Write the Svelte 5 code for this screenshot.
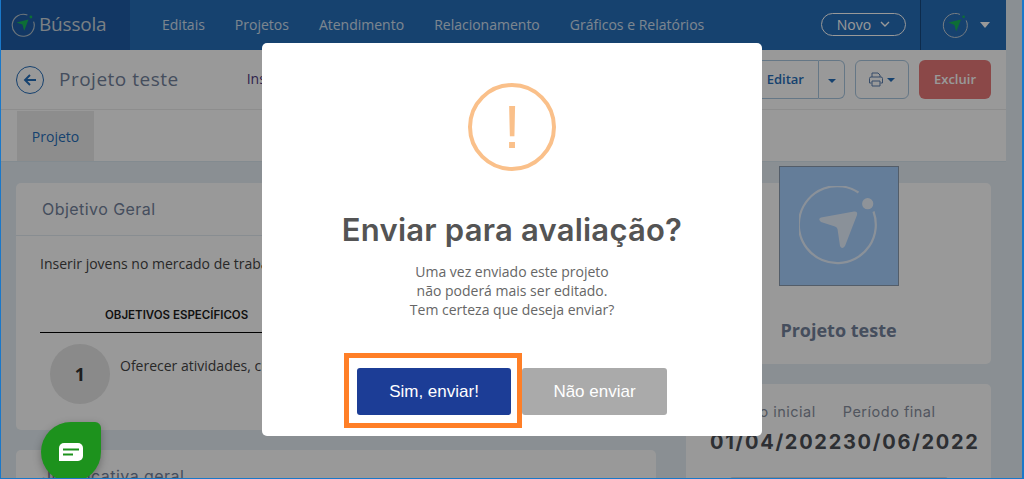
<script>
  const nav = ['Editais', 'Projetos', 'Atendimento', 'Relacionamento', 'Gráficos e Relatórios'];
</script>

<div class="frame">
  <div class="page">
    <div class="shell">
      <header class="topbar">
        <div class="brand">
          <svg class="brand-mark" viewBox="0 0 24 24" width="24" height="24" aria-hidden="true">
            <path d="M16.400 2.100A11 11 0 1 0 22.600 8.600" fill="none" stroke="#b9c4cc" stroke-width="1.100" />
            <circle cx="19.900" cy="4" r="1.400" fill="#17b85a" />
            <path d="M5.600 9.600 17.500 6.500 13.200 17.800 11.400 11.600Z" fill="#17b85a" />
          </svg>
          <span class="brand-name">Bússola</span>
        </div>
        <nav class="menu">
          {#each nav as item}
            <a href="#top">{item}</a>
          {/each}
        </nav>
        <button class="novo">Novo
          <svg viewBox="0 0 10 6" width="10" height="6" aria-hidden="true"><path d="M1 1l4 4 4-4" fill="none" stroke="#fff" stroke-width="1.400" /></svg>
        </button>
        <div class="user">
          <svg viewBox="0 0 26 26" width="26" height="26" aria-hidden="true">
            <path d="M18 2.400A12 12 0 1 0 24.200 8.400" fill="none" stroke="#c6d0d8" stroke-width="1" />
            <circle cx="21.600" cy="4.800" r="1.300" fill="#17b85a" />
            <path d="M6.500 10.600 19 7.400 14.200 19.600 12.400 13Z" fill="#17b85a" />
          </svg>
          <span class="caret-light"></span>
        </div>
      </header>

      <div class="subbar">
        <div class="title-side">
          <button class="back" aria-label="Voltar">
            <svg viewBox="0 0 16 16" width="16" height="16" aria-hidden="true"><path d="M14 8H3M8 3 3 8l5 5" fill="none" stroke="#266eb9" stroke-width="1.900" /></svg>
          </button>
          <h1>Projeto teste</h1>
          <span class="status">Inscrito</span>
        </div>
        <div class="actions">
          <div class="split">
            <button class="split-main">Editar</button>
            <button class="split-caret" aria-label="Mais"><span class="caret"></span></button>
          </div>
          <button class="print" aria-label="Imprimir">
            <svg viewBox="0 0 16 15" width="16" height="15" aria-hidden="true">
              <path d="M4 5V1h6l2 2v2M3.500 11H1.500V6.500A1.500 1.500 0 0 1 3 5h10a1.500 1.500 0 0 1 1.500 1.500V11h-2M4 9h8v5H4z" fill="none" stroke="#5b7fb0" stroke-width="1" />
            </svg>
            <span class="caret"></span>
          </button>
          <button class="danger">Excluir</button>
        </div>
      </div>

      <div class="tabs"><a class="tab" href="#top">Projeto</a></div>

      <main class="content">
        <div class="left">
          <section class="card goal">
            <h2>Objetivo Geral</h2>
            <div class="card-body">
              <p class="goal-text">Inserir jovens no mercado de trabalho</p>
              <div class="table-head"><span>OBJETIVOS ESPECÍFICOS</span></div>
              <div class="row">
                <span class="num">1</span>
                <p>Oferecer atividades, cursos e oficinas</p>
              </div>
            </div>
          </section>
          <section class="card just">
            <h2>Justificativa geral</h2>
          </section>
        </div>
        <aside class="right">
          <section class="card profile">
            <div class="tile">
              <svg viewBox="0 0 80 80" width="80" height="80" aria-hidden="true">
                <path d="M59.500 6.500A38.500 38.500 0 1 0 74.500 25.500" fill="none" stroke="#fff" stroke-opacity=".72" stroke-width="2.200" />
                <circle cx="68.700" cy="17.700" r="5.600" fill="#fff" fill-opacity=".8" />
                <path d="M22 31.500 55 25.500Q59 25 58 29L46 60Q43 64 41 60L38.500 43Q38 41 36 40.500L22 36Q18.500 33 22 31.500Z" fill="#fff" fill-opacity=".72" />
              </svg>
            </div>
            <strong>Projeto teste</strong>
          </section>
          <section class="card period">
            <div class="labels"><span>Período inicial</span><span>Período final</span></div>
            <div class="dates"><span>01/04/2022</span><span>30/06/2022</span></div>
            <div class="bar"></div>
          </section>
        </aside>
      </main>
    </div>

    <div class="scrim"></div>

    <div class="modal" role="dialog">
      <div class="alert-icon"><span>!</span></div>
      <h3>Enviar para avaliação?</h3>
      <p>Uma vez enviado este projeto<br />não poderá mais ser editado.<br />Tem certeza que deseja enviar?</p>
      <div class="modal-actions">
        <button class="yes">Sim, enviar!</button>
        <button class="no">Não enviar</button>
      </div>
      <div class="highlight"></div>
    </div>

    <button class="chat" aria-label="Chat">
      <svg viewBox="0 0 24 18" width="24" height="18" aria-hidden="true">
        <path d="M5 0h14a5 5 0 0 1 5 5v8a5 5 0 0 1-5 5H0V5a5 5 0 0 1 5-5Z" fill="#fff" />
        <rect x="4" y="5.500" width="16" height="2" fill="#1d921d" />
        <rect x="4" y="10.500" width="10" height="2" fill="#1d921d" />
      </svg>
    </button>
  </div>
</div>

<style>
  :global(body) { margin: 0; }
  * { box-sizing: border-box; }
  button { font: inherit; cursor: pointer; }

  .frame {
    width: 1024px;
    height: 479px;
    border: solid #1a78c9;
    border-width: 0 2px 1px 1px;
    overflow: hidden;
    font-family: "Open Sans", sans-serif;
  }
  .page {
    position: relative;
    width: 1021px;
    height: 478px;
    background: #e6eff5;
    overflow: hidden;
  }
  .shell { width: 1005px; }

  .topbar {
    height: 50px;
    display: flex;
    align-items: center;
    background: #266eb9;
    color: #fff;
  }
  .brand {
    width: 129px;
    height: 100%;
    display: flex;
    align-items: center;
    gap: 4px;
    padding-left: 10px;
    background: #1e5da7;
  }
  .brand-mark { flex: none; }
  .brand-name { font-size: 19px; color: #cdd5dc; letter-spacing: -.2px; margin-bottom: 2px; }
  .menu { display: flex; gap: 30px; margin: 0 0 2px 32px; flex: 1; }
  .menu a { color: #fff; opacity: .78; font-size: 14px; text-decoration: none; }
  .novo {
    width: 85px;
    height: 23px;
    display: flex;
    align-items: center;
    justify-content: center;
    gap: 9px;
    padding: 0 0 1px;
    margin-bottom: 1px;
    border: 1px solid #fff;
    border-radius: 12px;
    background: none;
    color: #fff;
    font-size: 14px;
  }
  .user {
    width: 86px;
    height: 100%;
    margin-left: 14px;
    display: flex;
    align-items: center;
    gap: 12px;
    padding-left: 21px;
    border-left: 1px solid #16497f;
  }
  .caret-light {
    width: 0; height: 0;
    border: 5px solid transparent;
    border-top: 6px solid #fff;
    border-bottom: 0;
  }

  .subbar {
    height: 60px;
    display: flex;
    align-items: center;
    justify-content: space-between;
    padding: 0 15px;
    background: #fff;
    border-bottom: 1px solid #ececec;
  }
  .title-side { display: flex; align-items: center; }
  .back {
    width: 28px;
    height: 28px;
    display: flex;
    align-items: center;
    justify-content: center;
    padding: 0;
    border: 1px solid #266eb9;
    border-radius: 50%;
    background: none;
  }
  h1 { margin: 0 0 2px 15px; font-size: 19px; font-weight: 400; color: #73829c; letter-spacing: .5px; }
  .status { margin: 0 0 2px 68px; font-size: 14px; color: #4f3a80; }
  .actions { display: flex; align-items: center; gap: 10px; }
  .split { display: flex; height: 39px; }
  .split-main {
    width: 80px;
    padding: 0 14px 2px 0;
    text-align: right;
    border: 1px solid #a9c7e0;
    border-radius: 6px 0 0 6px;
    background: #fff;
    color: #266eb9;
    font-size: 13px;
    font-weight: 600;
  }
  .split-caret {
    width: 26px;
    padding: 0;
    border: 1px solid #a9c7e0;
    border-left: 0;
    border-radius: 0 6px 6px 0;
    background: #fff;
  }
  .caret {
    display: inline-block;
    vertical-align: middle;
    width: 0; height: 0;
    border: 4px solid transparent;
    border-top: 4px solid #266eb9;
    border-bottom: 0;
  }
  .print {
    width: 54px;
    height: 39px;
    display: flex;
    align-items: center;
    justify-content: center;
    gap: 3px;
    padding: 0 2px 0 0;
    border: 1px solid #a9c7e0;
    border-radius: 6px;
    background: #fff;
  }
  .danger {
    width: 72px;
    height: 39px;
    padding: 0 0 2px;
    border: 0;
    border-radius: 6px;
    background: #e87878;
    color: #fff;
    font-size: 13px;
    font-weight: 600;
  }

  .tabs {
    height: 52px;
    padding: 1px 16px;
    background: #fff;
    border-bottom: 1px solid #dbe8f1;
  }
  .tab {
    display: flex;
    align-items: center;
    justify-content: center;
    width: 77px;
    height: 50px;
    background: #ececec;
    color: #266eb9;
    font-size: 14px;
    text-decoration: none;
  }

  .content {
    display: flex;
    gap: 30px;
    padding: 21px 15px 0;
  }
  .left { width: 640px; flex: none; }
  .right { width: 305px; flex: none; }
  .card { background: #fff; border-radius: 5px; }
  .left .card + .card, .right .card + .card { margin-top: 20px; }
  h2 {
    margin: 0;
    height: 53px;
    padding: 16px 26px 0;
    font-family: Inter, sans-serif;
    font-size: 16px;
    font-weight: 400;
    letter-spacing: .45px;
    color: #73829c;
    border-bottom: 1px solid #e3ebf2;
  }
  .goal { height: 247px; }
  .card-body { padding: 18px 24px 0; color: #444; }
  .goal-text { margin: 0; font-size: 14px; line-height: 20px; white-space: nowrap; }
  .table-head {
    height: 44px;
    margin-top: 15px;
    padding: 19px 0 0 65px;
    border-bottom: 1px solid #000;
    font-family: Inter, sans-serif;
    font-size: 11.500px;
    font-weight: 600;
    line-height: 14px;
    color: #1c1c1c;
  }
  .row { display: flex; gap: 10px; padding: 11px 10px 0; }
  .num {
    width: 60px;
    height: 60px;
    flex: none;
    display: flex;
    align-items: center;
    justify-content: center;
    border-radius: 50%;
    background: #e6e6e6;
    color: #333;
    font-size: 18px;
    font-weight: 700;
  }
  .row p { margin: 12px 0 0; font-size: 14px; line-height: 20px; white-space: nowrap; }
  .just { height: 60px; }

  .profile { height: 181px; text-align: center; }
  .tile {
    width: 120px;
    height: 120px;
    margin: 0 auto;
    position: relative;
    top: -17px;
    display: flex;
    align-items: center;
    justify-content: center;
    background: #a7d0ff;
    border: 1px solid #8a9bb0;
  }
  .profile strong { display: block; margin-top: 15px; font-size: 18px; line-height: 24px; font-weight: 700; color: #74829c; }
  .period { height: 120px; padding-top: 18px; }
  .labels {
    display: flex;
    gap: 27px;
    padding-left: 26px;
    font-family: Inter, sans-serif;
    font-size: 14.500px;
    letter-spacing: .5px;
    line-height: 20px;
    color: #888f9e;
  }
  .dates {
    display: flex;
    padding-left: 24px;
    margin-top: 8px;
    font-family: Inter, sans-serif;
    font-size: 20px;
    font-weight: 700;
    line-height: 24px;
    letter-spacing: 1.700px;
    color: #4c4f55;
  }
  .bar { width: 218px; height: 6px; margin: 23px 0 0 44px; background: #dcdcdc; border-radius: 3px; }

  .scrim { position: absolute; inset: 0; background: rgba(0, 0, 0, .4); }

  .modal {
    position: absolute;
    left: 261px;
    top: 43px;
    width: 500px;
    height: 393px;
    display: flex;
    flex-direction: column;
    align-items: center;
    padding-top: 40px;
    background: #fff;
    border-radius: 5px;
  }
  .alert-icon {
    width: 88px;
    height: 88px;
    flex: none;
    display: flex;
    align-items: center;
    justify-content: center;
    border: 4px solid #fac08a;
    border-radius: 50%;
    color: #fac08a;
  }
  .alert-icon span { font-family: "Liberation Sans", sans-serif; font-size: 62px; line-height: 1; }
  h3 {
    margin: 37px 0 0;
    font-family: Inter, sans-serif;
    font-size: 31px;
    font-weight: 600;
    line-height: 44px;
    letter-spacing: .22px;
    color: #545454;
    white-space: nowrap;
  }
  .modal p {
    margin: 10px 0 0;
    font-size: 14px;
    line-height: 19px;
    text-align: center;
    color: #666;
  }
  .modal-actions { display: flex; gap: 11px; margin-top: 49px; }
  .modal-actions button {
    height: 47px;
    border: 0;
    border-radius: 3px;
    color: #fff;
    font-family: "Liberation Sans", sans-serif;
    font-size: 17px;
  }
  .yes { width: 154px; background: #1c3d96; }
  .no { width: 145px; background: #aaa; }
  .highlight {
    position: absolute;
    left: 82px;
    top: 310px;
    width: 178px;
    height: 75px;
    border: 5px solid #ff7f27;
    pointer-events: none;
  }

  .chat {
    position: absolute;
    left: 40px;
    top: 422px;
    width: 60px;
    height: 60px;
    display: flex;
    align-items: center;
    justify-content: center;
    padding: 0;
    border: 0;
    border-radius: 50% 6px 50% 50%;
    background: #1d921d;
    box-shadow: 0 3px 8px rgba(0, 0, 0, .3);
  }
</style>
